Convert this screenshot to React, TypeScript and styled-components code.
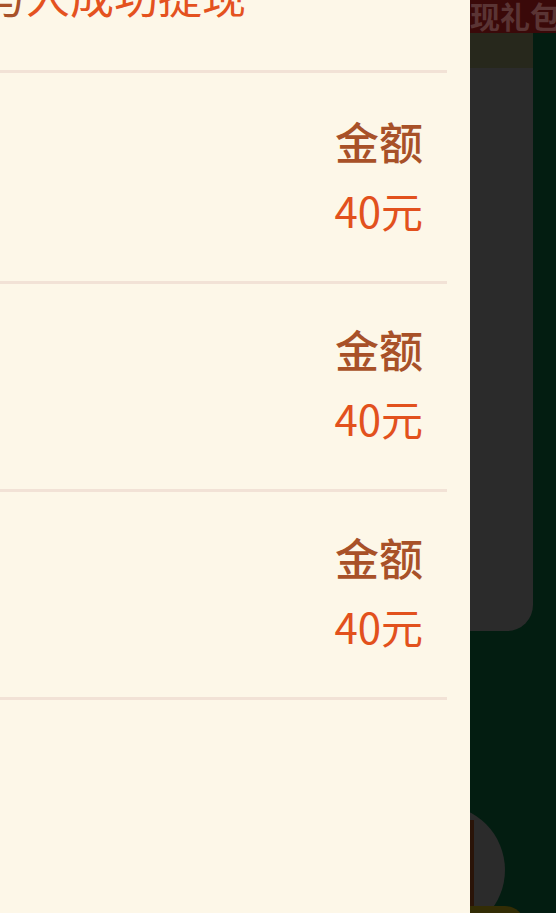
import React from 'react';
import styled, { createGlobalStyle } from 'styled-components';

const GlobalStyle = createGlobalStyle`
  html, body {
    margin: 0;
    padding: 0;
    height: 100%;
    overflow: hidden;
    background: #031d11;
  }
  #root {
    height: 100%;
  }
`;

const Page = styled.div`
  display: flex;
  width: 556px;
  height: 913px;
  overflow: hidden;
  font-family: "Noto Sans CJK SC", "Noto Sans", sans-serif;
`;

const Panel = styled.div`
  position: relative;
  z-index: 1;
  width: 470px;
  flex-shrink: 0;
  background: #fdf7e8;
  overflow: hidden;
`;

const List = styled.div`
  width: 447px;
`;

const Header = styled.div`
  margin-top: -27px;
  margin-left: -18px;
  height: 100px;
  box-sizing: border-box;
  border-bottom: 3px solid #f2e2d6;
  font-size: 44px;
  line-height: 44px;
  color: #e4521f;
  white-space: nowrap;
`;

const Strong = styled.span`
  color: #a85128;
`;

const Row = styled.div<{ $first?: boolean }>`
  height: ${(p) => (p.$first ? 211 : 208)}px;
  box-sizing: border-box;
  padding: ${(p) => (p.$first ? 46 : 43)}px 24px 0 0;
  border-bottom: 3px solid #f2e2d6;
  display: flex;
  flex-direction: column;
  align-items: flex-end;
  gap: 25px;
`;

const Label = styled.div`
  font-size: 44px;
  line-height: 44px;
  font-weight: 500;
  color: #a85128;
`;

const Value = styled.div`
  font-size: 42px;
  line-height: 44px;
  color: #e2511d;
`;

const Side = styled.div`
  flex: 1;
  position: relative;
  display: flex;
  flex-direction: column;
  background: #031d11;
`;

const Banner = styled.div`
  height: 35px;
  background: #3a0909;
  color: #5a3434;
  font-size: 30px;
  font-weight: 700;
  line-height: 35px;
  white-space: nowrap;
  overflow: hidden;
  margin-top: -2px;
`;

const Card = styled.div`
  width: 63px;
  height: 598px;
  background: #2b2b2b;
  border-bottom-right-radius: 26px;
  overflow: hidden;
`;

const CardTop = styled.div`
  height: 35px;
  background: #27281c;
`;

const Bubble = styled.div`
  position: absolute;
  left: -95px;
  top: 805px;
  width: 130px;
  height: 130px;
  border-radius: 50%;
  background: #2b2b2b;
`;

const Stem = styled.div`
  position: absolute;
  left: 0;
  top: 820px;
  width: 4px;
  height: 93px;
  background: #2a1408;
`;

const Glow = styled.div`
  position: absolute;
  left: 0;
  top: 906px;
  width: 55px;
  height: 20px;
  border-radius: 0 30px 0 0;
  background: #332d05;
`;

const rows = [1, 2, 3];

export default function App() {
  return (
    <>
      <GlobalStyle />
      <Page>
        <Panel>
          <List>
            <Header>
              <Strong>与</Strong>人成功提现
            </Header>
            {rows.map((r) => (
              <Row key={r} $first={r === 1}>
                <Label>金额</Label>
                <Value>40元</Value>
              </Row>
            ))}
          </List>
        </Panel>
        <Side>
          <Banner>现礼包</Banner>
          <Card>
            <CardTop />
          </Card>
          <Bubble />
          <Stem />
          <Glow />
        </Side>
      </Page>
    </>
  );
}
